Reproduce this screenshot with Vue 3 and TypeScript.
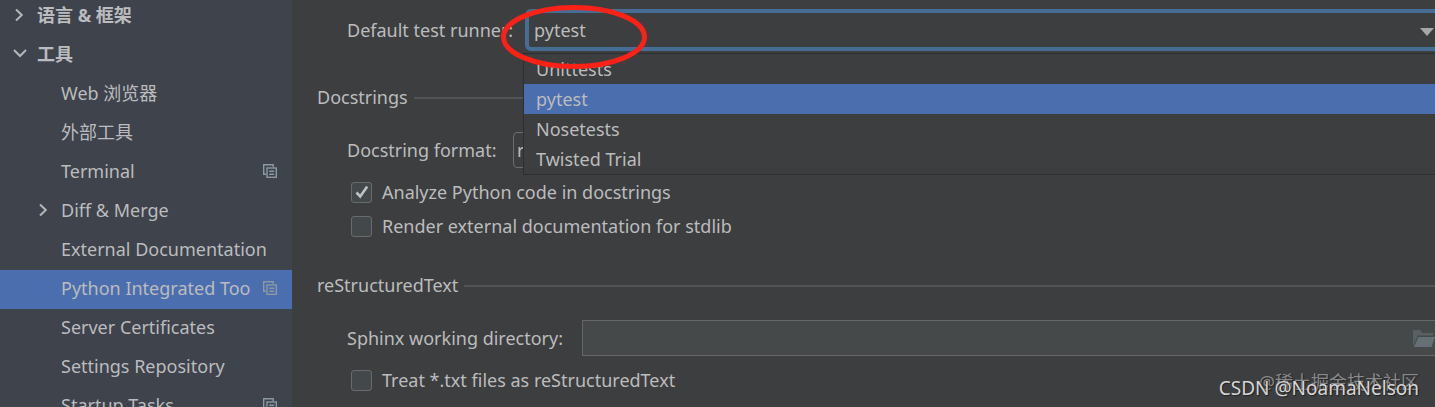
<script setup lang="ts">
import { ref } from 'vue'

interface TreeItem {
  label: string
  level: 0 | 1
  arrow?: 'right' | 'down'
  copy?: boolean
}

const items: TreeItem[] = [
  { label: '语言 & 框架', level: 0, arrow: 'right' },
  { label: '工具', level: 0, arrow: 'down' },
  { label: 'Web 浏览器', level: 1 },
  { label: '外部工具', level: 1 },
  { label: 'Terminal', level: 1, copy: true },
  { label: 'Diff & Merge', level: 1, arrow: 'right' },
  { label: 'External Documentation', level: 1 },
  { label: 'Python Integrated Too', level: 1, copy: true },
  { label: 'Server Certificates', level: 1 },
  { label: 'Settings Repository', level: 1 },
  { label: 'Startup Tasks', level: 1, copy: true },
]
const selected = ref(7)

const runners = ['Unittests', 'pytest', 'Nosetests', 'Twisted Trial']
const runner = ref('pytest')
const format = ref('reStructuredText')
const analyze = ref(true)
const render = ref(false)
const sphinxDir = ref('')
const treatTxt = ref(false)
</script>

<template>
  <div class="settings">
    <nav class="sidebar" aria-label="Settings">
      <button
        v-for="(item, i) in items"
        :key="item.label"
        type="button"
        class="tree-row"
        :class="{ selected: i === selected, group: item.level === 0, child: item.level === 1 }"
        @click="selected = i"
      >
        <span class="arrow">
          <svg v-if="item.arrow === 'right'" width="14" height="14" viewBox="0 0 14 14">
            <path d="M4 1.5 L9.8 7 L4 12.5" />
          </svg>
          <svg v-else-if="item.arrow === 'down'" width="14" height="14" viewBox="0 0 14 14">
            <path d="M2 3 L8 9 L14 3" />
          </svg>
        </span>
        <span class="tree-label">{{ item.label }}</span>
        <svg v-if="item.copy" class="copy" width="14" height="14" viewBox="0 0 14 14">
          <path d="M3 10.2 H0.7 V0.7 H10.2 V3" />
          <rect x="4" y="4" width="9.3" height="9.3" />
          <path d="M6.2 7.2 H11.2 M6.2 10.2 H11.2" />
        </svg>
      </button>
    </nav>

    <main class="content">
      <div class="field runner">
        <label for="runner">Default test runner:</label>
        <div class="combo">
          <select id="runner" v-model="runner">
            <option v-for="r in runners" :key="r">{{ r }}</option>
          </select>
          <svg class="caret" width="14" height="8" viewBox="0 0 14 8"><path d="M0 0 H14 L7 8 Z" /></svg>
          <ul class="popup" role="listbox" aria-label="Default test runner">
            <li
              v-for="r in runners"
              :key="r"
              role="option"
              :aria-selected="r === runner"
              :class="{ active: r === runner }"
              @click="runner = r"
            >{{ r }}</li>
          </ul>
          <svg class="ring" width="146" height="64" viewBox="0 0 146 64">
            <ellipse cx="73" cy="32" rx="70.5" ry="29.5" />
          </svg>
        </div>
      </div>

      <h2 class="section">Docstrings</h2>
      <div class="field format">
        <label for="format">Docstring format:</label>
        <select id="format" v-model="format">
          <option>reStructuredText</option>
        </select>
      </div>
      <label class="check first"><input v-model="analyze" type="checkbox" /><svg v-if="analyze" class="tick" width="14" height="14" viewBox="0 0 14 14"><path d="M1.5 7.5 L5.2 11.5 L12.2 1.5" /></svg><span>Analyze Python code in docstrings</span></label>
      <label class="check"><input v-model="render" type="checkbox" /><span>Render external documentation for stdlib</span></label>

      <h2 class="section">reStructuredText</h2>
      <div class="field sphinx">
        <label for="sphinx">Sphinx working directory:</label>
        <div class="path">
          <input id="sphinx" v-model="sphinxDir" type="text" />
          <svg class="folder" width="22" height="17" viewBox="0 0 22 17">
            <path class="back" d="M0 0 H7 L9.5 3 H20 V5.5 H5 L0.5 15 H0 Z" />
            <path class="front" d="M5.5 7 H22 L18.5 17 H0.8 Z" />
          </svg>
        </div>
      </div>
      <label class="check first"><input v-model="treatTxt" type="checkbox" /><span>Treat *.txt files as reStructuredText</span></label>
    </main>

    <span class="mark community">@稀土掘金技术社区</span>
    <span class="mark author">CSDN @NoamaNelson</span>
  </div>
</template>

<style>
body {
  background: #3d3e40;
}
</style>

<style scoped>
.settings {
  position: relative;
  display: flex;
  height: 100vh;
  overflow: hidden;
  background: #3d3e40;
  color: #bbbcbd;
  font: 18px/24px "Noto Sans", "Noto Sans CJK SC", sans-serif;
}

.settings * {
  box-sizing: border-box;
}

.sidebar {
  flex: 0 0 292px;
  margin-top: -3px;
  background: #3e434c;
}

.tree-row {
  display: flex;
  align-items: center;
  width: 100%;
  height: 39px;
  padding: 0 15px 4px 12px;
  border: 0;
  background: none;
  color: inherit;
  font: inherit;
  text-align: left;
  white-space: nowrap;
}

.tree-row.group {
  font-weight: 700;
}

.tree-row.child {
  padding-left: 36px;
}

.tree-row.selected {
  background: #4b6eaf;
}

.arrow {
  display: flex;
  flex: 0 0 25px;
}

.arrow svg {
  overflow: visible;
}

.arrow path {
  fill: none;
  stroke: #b4b6b8;
  stroke-width: 2;
}

.tree-label {
  flex: 1;
}

.copy {
  flex: none;
  fill: none;
  stroke: #8c98a3;
  stroke-width: 1.4;
}

.content {
  flex: 1;
  min-width: 0;
  padding: 9px 0 0 25px;
}

.field {
  display: flex;
  align-items: center;
  padding-left: 30px;
  white-space: nowrap;
}

.runner label {
  flex: 0 0 178px;
}

.combo {
  position: relative;
  flex: 1;
}

select {
  display: block;
  appearance: none;
  outline: 0;
  background: #3d3e40;
  color: inherit;
  font: inherit;
}

.combo select {
  width: calc(100% + 12px);
  height: 42px;
  padding: 0 5px;
  border: 4px solid #466d94;
  border-radius: 6px;
}

.caret {
  position: absolute;
  top: 19px;
  right: 1px;
  fill: #a5a6a7;
}

.popup {
  position: absolute;
  z-index: 1;
  top: 44px;
  left: -2px;
  right: -12px;
  margin: 0;
  padding: 0;
  border: 1px solid #2d2e2f;
  background: #3d3e40;
  list-style: none;
}

.popup li {
  height: 30px;
  padding: 0 12px;
  line-height: 30px;
}

.popup .active {
  background: #4b6eaf;
}

.ring {
  position: absolute;
  z-index: 2;
  top: -4px;
  left: -24px;
  fill: none;
  stroke: #fa2116;
  stroke-width: 5;
  pointer-events: none;
}

.section {
  display: flex;
  align-items: center;
  gap: 6px;
  margin: 34px 0 23px;
  font: inherit;
}

.check + .section {
  margin-top: 35px;
}

.section::after {
  flex: 1;
  height: 2px;
  margin-top: 2px;
  background: #515355;
  content: "";
}

.format label {
  flex: 0 0 166px;
}

.format select {
  width: 220px;
  height: 36px;
  padding: 0 3px;
  border: 1px solid #6b6d6f;
  border-radius: 4px;
}

.check {
  position: relative;
  display: flex;
  align-items: center;
  gap: 10px;
  width: fit-content;
  margin: 10px 0 0 34px;
}

.check.first {
  margin-top: 12px;
}

.check input {
  appearance: none;
  width: 21px;
  height: 21px;
  margin: 0;
  border: 1px solid #686b6c;
  border-radius: 3px;
  background: #43494a;
}

.tick {
  position: absolute;
  left: 4px;
  fill: none;
  stroke: #c0c1c2;
  stroke-width: 2.6;
}

.sphinx label {
  flex: 0 0 235px;
}

.path {
  position: relative;
  flex: 1;
}

.path input {
  display: block;
  width: calc(100% + 12px);
  height: 36px;
  padding: 0 6px;
  border: 1px solid #646667;
  outline: 0;
  background: #45494a;
  color: inherit;
  font: inherit;
}

.folder {
  position: absolute;
  top: 10px;
  right: 0;
}

.back {
  fill: #596063;
}

.front {
  fill: #666f75;
}

.mark {
  position: absolute;
  right: 16px;
  white-space: nowrap;
}

.community {
  bottom: 13px;
  color: #88898b;
  text-shadow: 1px 1px 1px #222;
}

.author {
  bottom: 7px;
  color: #d6d6d7;
  font-size: 19px;
  text-shadow: 1px 1px 1px #222;
}
</style>
